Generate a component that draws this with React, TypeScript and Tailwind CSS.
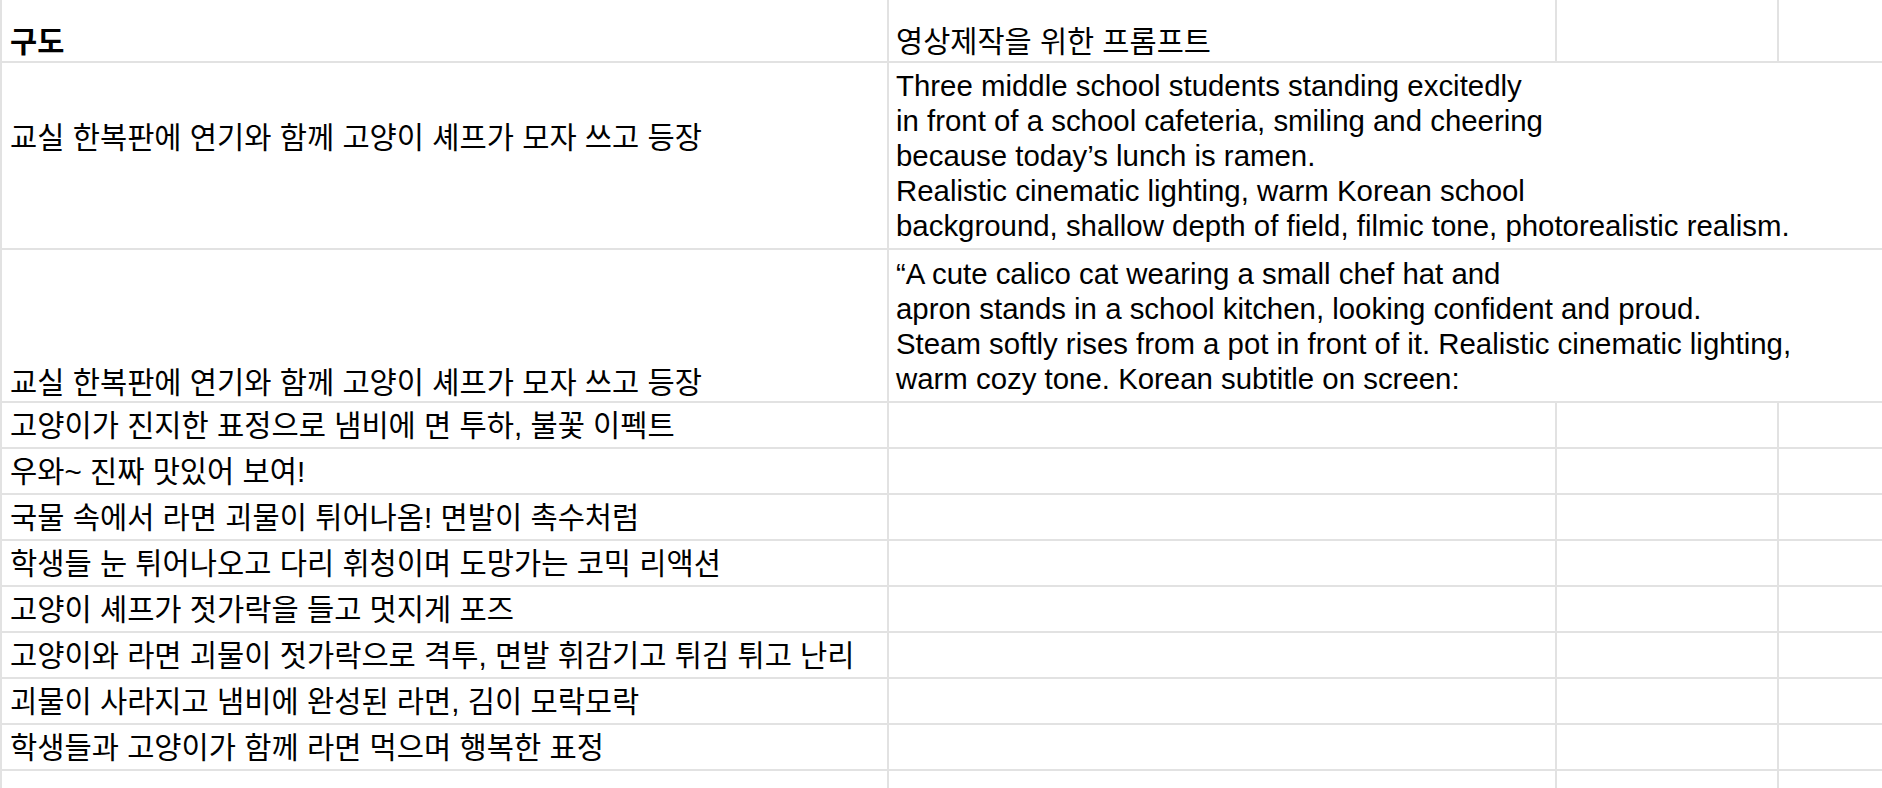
import React from 'react';

const ko = '[font-family:"Liberation_Sans","Noto_Sans_CJK_KR",sans-serif]';
const line = 'border-l-2 border-b-2 border-[#e2e2e2]';

const prompt1 = [
  'Three middle school students standing excitedly',
  'in front of a school cafeteria, smiling and cheering',
  'because today’s lunch is ramen.',
  'Realistic cinematic lighting, warm Korean school',
  'background, shallow depth of field, filmic tone, photorealistic realism.',
];

const prompt2 = [
  '“A cute calico cat wearing a small chef hat and',
  'apron stands in a school kitchen, looking confident and proud.',
  'Steam softly rises from a pot in front of it. Realistic cinematic lighting,',
  'warm cozy tone. Korean subtitle on screen:',
];

const scenes = [
  '고양이가 진지한 표정으로 냄비에 면 투하, 불꽃 이펙트',
  '우와~ 진짜 맛있어 보여!',
  '국물 속에서 라면 괴물이 튀어나옴! 면발이 촉수처럼',
  '학생들 눈 튀어나오고 다리 휘청이며 도망가는 코믹 리액션',
  '고양이 셰프가 젓가락을 들고 멋지게 포즈',
  '고양이와 라면 괴물이 젓가락으로 격투, 면발 휘감기고 튀김 튀고 난리',
  '괴물이 사라지고 냄비에 완성된 라면, 김이 모락모락',
  '학생들과 고양이가 함께 라면 먹으며 행복한 표정',
  '',
];

function PromptCell({ lines }: { lines: string[] }) {
  return (
    <div className={`flex-1 flex flex-col justify-center pl-[7px] ${line}`}>
      {lines.map((l) => (
        <div
          key={l}
          className='whitespace-nowrap text-[29.4px] leading-[35px] text-black [font-family:"Liberation_Sans","Noto_Sans_CJK_KR",sans-serif]'
        >
          {l}
        </div>
      ))}
    </div>
  );
}

export default function App() {
  return (
    <div className="h-[788px] w-[1882px] overflow-hidden bg-white text-black">
      {/* header */}
      <div className="flex h-[63px]">
        <div className={`w-[887px] shrink-0 flex items-end pl-[8px] pb-[2px] ${line}`}>
          <span className={`${ko} whitespace-nowrap text-[29.5px] leading-[35px] font-bold`}>구도</span>
        </div>
        <div className={`w-[668px] shrink-0 flex items-end pl-[7px] pb-[2px] ${line}`}>
          <span className={`${ko} whitespace-nowrap text-[29.5px] leading-[35px]`}>영상제작을 위한 프롬프트</span>
        </div>
        <div className={`w-[222px] shrink-0 ${line}`} />
        <div className={`flex-1 ${line}`} />
      </div>

      {/* row 1 */}
      <div className="flex h-[187px]">
        <div className={`w-[887px] shrink-0 flex items-center pl-[8px] pb-[37px] ${line}`}>
          <span className={`${ko} whitespace-nowrap text-[29.6px] leading-[35px]`}>
            교실 한복판에 연기와 함께 고양이 셰프가 모자 쓰고 등장
          </span>
        </div>
        <PromptCell lines={prompt1} />
      </div>

      {/* row 2 */}
      <div className="flex h-[153px]">
        <div className={`w-[887px] shrink-0 flex items-end pl-[8px] pb-[1px] ${line}`}>
          <span className={`${ko} whitespace-nowrap text-[29.6px] leading-[35px]`}>
            교실 한복판에 연기와 함께 고양이 셰프가 모자 쓰고 등장
          </span>
        </div>
        <PromptCell lines={prompt2} />
      </div>

      {scenes.map((s, i) => (
        <div key={i} className="flex h-[46px]">
          <div className={`w-[887px] shrink-0 flex items-center pl-[8px] ${line}`}>
            <span className={`${ko} whitespace-nowrap text-[29.6px] leading-[35px]`}>{s}</span>
          </div>
          <div className={`w-[668px] shrink-0 ${line}`} />
          <div className={`w-[222px] shrink-0 ${line}`} />
          <div className={`flex-1 ${line}`} />
        </div>
      ))}
    </div>
  );
}
